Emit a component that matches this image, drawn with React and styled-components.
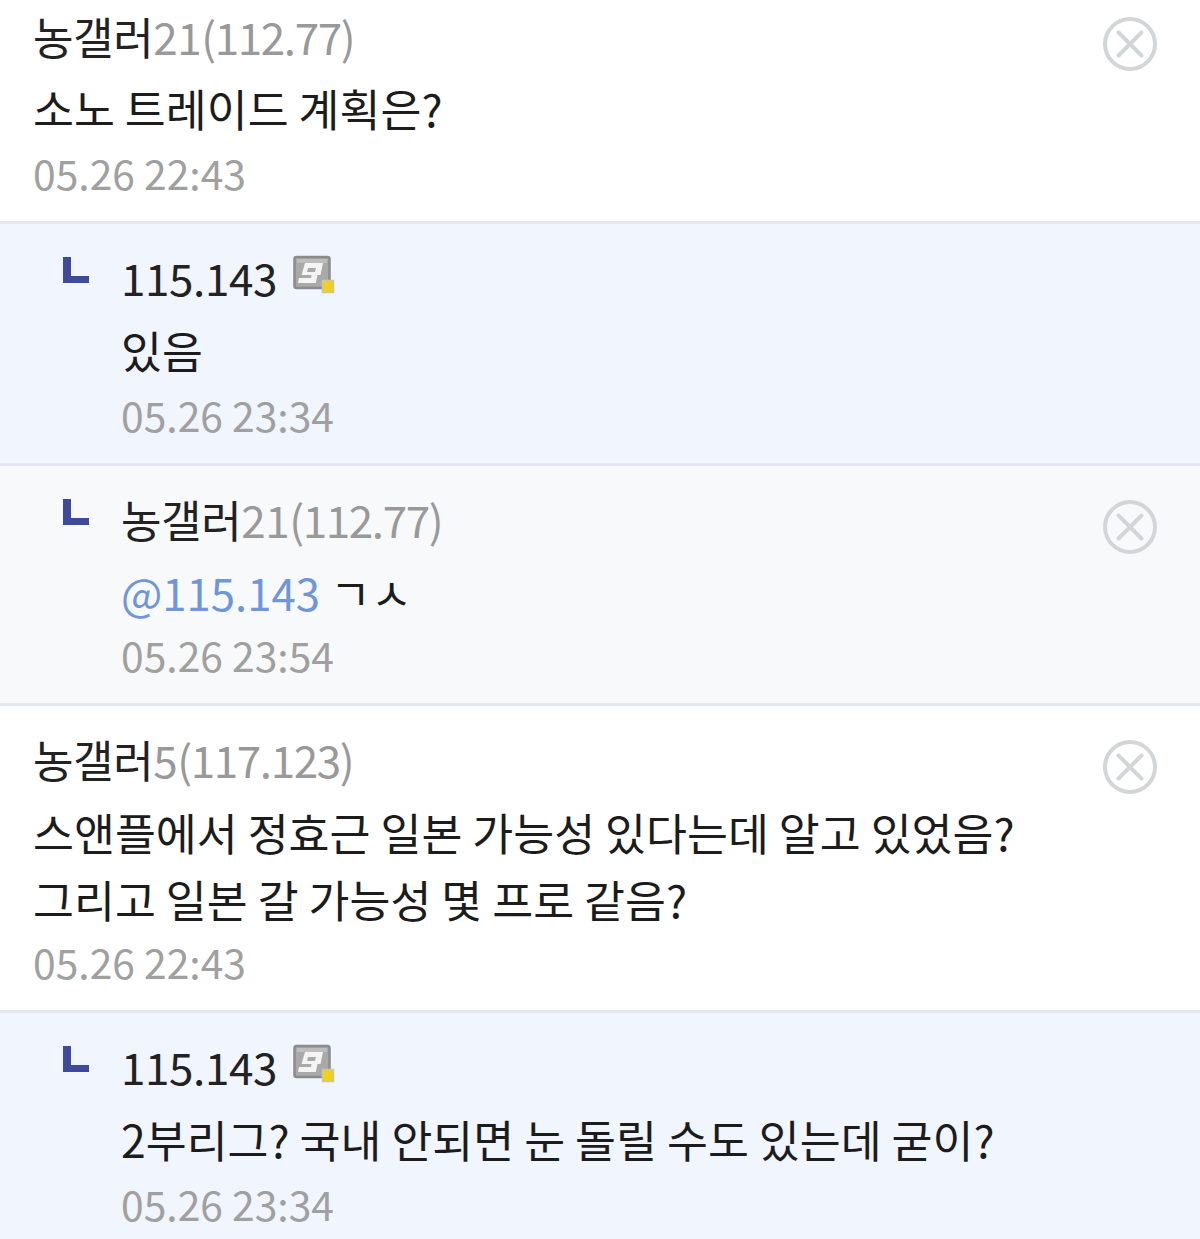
import React from "react"
import styled, { createGlobalStyle } from "styled-components"

const GlobalStyle = createGlobalStyle`
  html, body {
    margin: 0;
    padding: 0;
    background: #fff;
    overflow: hidden;
  }
  body {
    font-family: "Noto Sans CJK KR", "Noto Sans", sans-serif;
  }
`

const rowBackground = {
  plain: "#ffffff",
  reply: "#f1f5fe",
  nested: "#f8f9fb",
}

const List = styled.div`
  display: flex;
  flex-direction: column;
  width: 1200px;
  height: 1239px;
  overflow: hidden;
`

const Row = styled.div`
  display: flex;
  flex-shrink: 0;
  background: ${(p) => rowBackground[p.$kind]};
  border-bottom: 3px solid #e4e6f1;
  padding: ${(p) => (p.$first ? "2px" : "19px")} 0 17px 33px;

  &:last-child {
    border-bottom: 0;
  }
`

const Indent = styled.div`
  flex: 0 0 88px;
  padding: 14px 0 0 30px;
  box-sizing: border-box;
`

const Content = styled.div`
  flex: 1;
  min-width: 0;
`

const NameLine = styled.div`
  display: flex;
  align-items: flex-start;
  height: 68px;
  margin-bottom: ${(p) => (p.$first ? "4px" : "5px")};
  font-size: 44px;
  line-height: 68px;
  letter-spacing: -0.4px;
  color: #222;
`

const Gonick = styled.span`
  color: #999;
`

const Addr = styled.span`
  color: #999;
  letter-spacing: -1.4px;
`

const Body = styled.div`
  font-size: 44.5px;
  line-height: 67px;
  color: #1c1c1c;
  white-space: nowrap;

  & + & {
    margin-bottom: -2px;
  }
`

const MentionBody = styled(Body)`
  margin: 3px 0 -3px;
`

const Mention = styled.span`
  color: #6f96d9;
  font-size: 43.7px;
`

const Time = styled.div`
  font-size: 40.8px;
  line-height: 63px;
  color: #a0a0a0;
`

const GlyphIcon = styled.svg`
  width: 42px;
  height: 40px;
  margin: 12px 0 0 16px;
  flex-shrink: 0;
`

const DeleteIcon = styled.svg`
  flex: 0 0 54px;
  width: 54px;
  height: 54px;
  margin: 15px 43px 0 0;
`

const ReplyMark = () => (
  <svg width="26" height="26" viewBox="0 0 26 26">
    <path d="M0 0h8v19h18v7H0z" fill="#3f4a9c" />
  </svg>
)

const Glyph = () => (
  <GlyphIcon viewBox="0 0 42 40">
    <rect x="1.5" y="2" width="35" height="31" rx="2" fill="#a9a9a9" stroke="#8b8b8b" strokeWidth="2.5" />
    <path d="M4 4h30v4H4z" fill="#bdbdbd" />
    <path
      d="M12 8h18l-2.5 12h-3l-1.7 8H5l1-5h12l.5-3H8.5zM15 13l-1 4h8l1-4z"
      fill="#f4f4f4"
      fillRule="evenodd"
    />
    <rect x="29.5" y="25.5" width="11" height="12" fill="#f2cf1d" stroke="#c9c9a0" strokeWidth="1.5" />
  </GlyphIcon>
)

const Delete = () => (
  <DeleteIcon viewBox="0 0 54 54">
    <circle cx="27" cy="27" r="25" fill="none" stroke="#d3d6d8" strokeWidth="4" />
    <path d="M15.5 15.5l23 23M38.5 15.5l-23 23" fill="none" stroke="#d3d6d8" strokeWidth="4" strokeLinecap="round" />
  </DeleteIcon>
)

const Comment = ({ kind = "plain", first, nick, num, addr, glyph, canDelete, time, children }) => (
  <Row $kind={kind} $first={first}>
    {kind !== "plain" && (
      <Indent>
        <ReplyMark />
      </Indent>
    )}
    <Content>
      <NameLine $first={first}>
        {nick}
        {num && <Gonick>{num}</Gonick>}
        {addr && <Addr>{addr}</Addr>}
        {glyph && <Glyph />}
      </NameLine>
      {children}
      <Time>{time}</Time>
    </Content>
    {canDelete && <Delete />}
  </Row>
)

export default function App() {
  return (
    <List>
      <GlobalStyle />
      <Comment first nick="농갤러" num="21" addr="(112.77)" canDelete time="05.26 22:43">
        <Body>소노 트레이드 계획은?</Body>
      </Comment>
      <Comment kind="reply" nick="115.143" glyph time="05.26 23:34">
        <Body>있음</Body>
      </Comment>
      <Comment kind="nested" nick="농갤러" num="21" addr="(112.77)" canDelete time="05.26 23:54">
        <MentionBody>
          <Mention>@115.143</Mention> ㄱㅅ
        </MentionBody>
      </Comment>
      <Comment nick="농갤러" num="5" addr="(117.123)" canDelete time="05.26 22:43">
        <Body>스앤플에서 정효근 일본 가능성 있다는데 알고 있었음?</Body>
        <Body>그리고 일본 갈 가능성 몇 프로 같음?</Body>
      </Comment>
      <Comment kind="reply" nick="115.143" glyph time="05.26 23:34">
        <Body>2부리그? 국내 안되면 눈 돌릴 수도 있는데 굳이?</Body>
      </Comment>
    </List>
  )
}
